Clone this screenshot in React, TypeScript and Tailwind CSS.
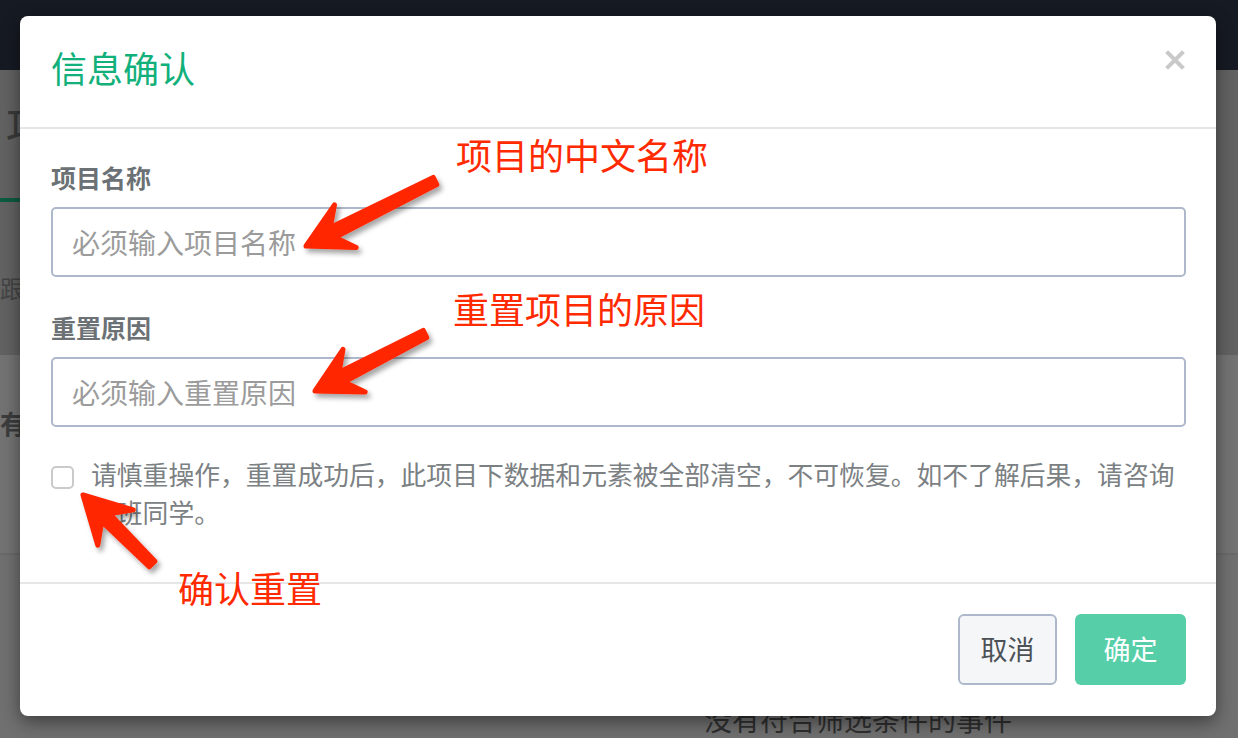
import React from "react";

type Pt = [number, number];

// arrow polygon from tail to tip, with a slightly barbed head
const arrowPoints = (
  tail: Pt,
  tip: Pt,
  headLen: number,
  headHalf: number,
  neck: number,
  wTail: number,
  wNeck: number
) => {
  const dx = tip[0] - tail[0];
  const dy = tip[1] - tail[1];
  const len = Math.hypot(dx, dy);
  const u: Pt = [dx / len, dy / len];
  const n: Pt = [-u[1], u[0]];
  const at = (base: Pt, back: number, side: number): Pt => [
    base[0] - u[0] * back + n[0] * side,
    base[1] - u[1] * back + n[1] * side,
  ];
  const pts: Pt[] = [
    tip,
    at(tip, headLen, headHalf),
    at(tip, neck, wNeck / 2),
    at(tail, 0, wTail / 2),
    at(tail, 0, -wTail / 2),
    at(tip, neck, -wNeck / 2),
    at(tip, headLen, -headHalf),
  ];
  return pts.map((p) => `${p[0].toFixed(1)},${p[1].toFixed(1)}`).join(" ");
};

const arrows = [
  arrowPoints([435, 181], [306, 246], 44, 24, 30, 8, 11),
  arrowPoints([425, 334], [315, 391], 44, 24, 30, 8, 11),
  arrowPoints([152, 564], [83, 495], 46, 25, 32, 8, 11),
];

const Annotations = () => (
  <div className="pointer-events-none absolute inset-0 font-['Noto_Sans_CJK_SC',sans-serif] text-[#ff2a00]">
    <svg className="absolute inset-0" width="1238" height="738">
      <defs>
        <filter id="sh" x="-20%" y="-20%" width="140%" height="140%">
          <feDropShadow dx="3" dy="4" stdDeviation="2.5" floodColor="#000" floodOpacity="0.35" />
        </filter>
      </defs>
      {arrows.map((p, i) => (
        <polygon
          key={i}
          points={p}
          fill="#ff2600"
          stroke="#ff2600"
          strokeWidth="5"
          strokeLinejoin="round"
          filter="url(#sh)"
        />
      ))}
    </svg>
    <div className="absolute left-[456px] top-[134px] text-[36px] leading-[40px]">项目的中文名称</div>
    <div className="absolute left-[453px] top-[288px] text-[36px] leading-[40px]">重置项目的原因</div>
    <div className="absolute left-[178px] top-[567px] text-[36px] leading-[40px]">确认重置</div>
  </div>
);

const Background = () => (
  <div className="flex h-full flex-col font-['Noto_Sans_CJK_SC',sans-serif]">
    <div className="h-[70px] bg-[#161a22]" />
    <div className="flex h-[285px] flex-col bg-[#626262]">
      <div className="px-[6px] pt-[26px] text-[46px] leading-[56px] text-[#3a3a3a]">项目管理</div>
      <div className="mt-[46px] h-[4px] w-[80px] bg-[#0d5b3e]" />
      <div className="pt-[68px] text-[24px] text-[#444]">跟踪</div>
    </div>
    <div className="flex h-[200px] flex-col border-b-2 border-[#6a6a6a] bg-[#737373]">
      <div className="pt-[48px] text-[26px] font-bold text-[#3c3c3c]">有限</div>
    </div>
    <div className="flex flex-1 flex-col bg-[#707070]">
      <div className="flex-1" />
      <div className="pb-[2px] pl-[704px] text-[28px] leading-[34px] text-[#2f2f2f]">没有符合筛选条件的事件</div>
    </div>
  </div>
);

const Modal = () => (
  <div className="absolute left-[20px] top-[16px] flex h-[700px] w-[1196px] flex-col rounded-[8px] bg-white shadow-[0_6px_18px_rgba(0,0,0,0.45)] font-['Noto_Sans_CJK_SC',sans-serif]">
    <div className="flex h-[113px] items-center justify-between border-b-2 border-[#e6e6e6] pl-[31px] pr-[31px] pb-[4px]">
      <h2 className="text-[36px] leading-[44px] text-[#12b07b] -mt-[6px]">信息确认</h2>
      <button className="-mt-[20px] -mr-[2px] flex h-[24px] w-[24px] items-center justify-center">
        <svg width="20" height="20" viewBox="0 0 20 20">
          <path d="M3 3 L17 17 M17 3 L3 17" stroke="#c9c9c9" strokeWidth="4" strokeLinecap="square" />
        </svg>
      </button>
    </div>

    <div className="flex flex-col border-b-2 border-[#e6e6e6] pl-[31px] pr-[30px] pt-[33px] pb-[51px]">
      <label className="text-[25px] font-bold leading-[30px] text-[#6b7174]">项目名称</label>
      <input
        className="mt-[15px] h-[70px] rounded-[5px] border-2 border-[#adb9ca] px-[19px] text-[28px] outline-none placeholder:text-[#9b9b9b]"
        placeholder="必须输入项目名称"
      />
      <label className="mt-[35px] text-[25px] font-bold leading-[30px] text-[#6b7174]">重置原因</label>
      <input
        className="mt-[15px] h-[70px] rounded-[5px] border-2 border-[#adb9ca] px-[19px] text-[28px] outline-none placeholder:text-[#9b9b9b]"
        placeholder="必须输入重置原因"
      />
      <div className="mt-[28px] flex items-start">
        <span className="mt-[11px] h-[23px] w-[23px] shrink-0 rounded-[5px] border-2 border-[#cacaca] bg-white" />
        <p className="ml-[17px] text-[25.8px] leading-[38px] text-[#7b8083]">
          请慎重操作，重置成功后，此项目下数据和元素被全部清空，不可恢复。如不了解后果，请咨询值班同学。
        </p>
      </div>
    </div>

    <div className="flex flex-1 items-start justify-end gap-[18px] pr-[30px] pt-[30px]">
      <button className="h-[71px] w-[99px] rounded-[6px] border-2 border-[#adb9ca] bg-[#f5f6f8] text-[27px] text-[#4b5156]">
        取消
      </button>
      <button className="h-[71px] w-[111px] rounded-[6px] bg-[#56cfa9] text-[27px] text-white">
        确定
      </button>
    </div>
  </div>
);

export default function App() {
  return (
    <div className="relative h-[738px] w-[1238px] overflow-hidden">
      <Background />
      <Modal />
      <Annotations />
    </div>
  );
}
